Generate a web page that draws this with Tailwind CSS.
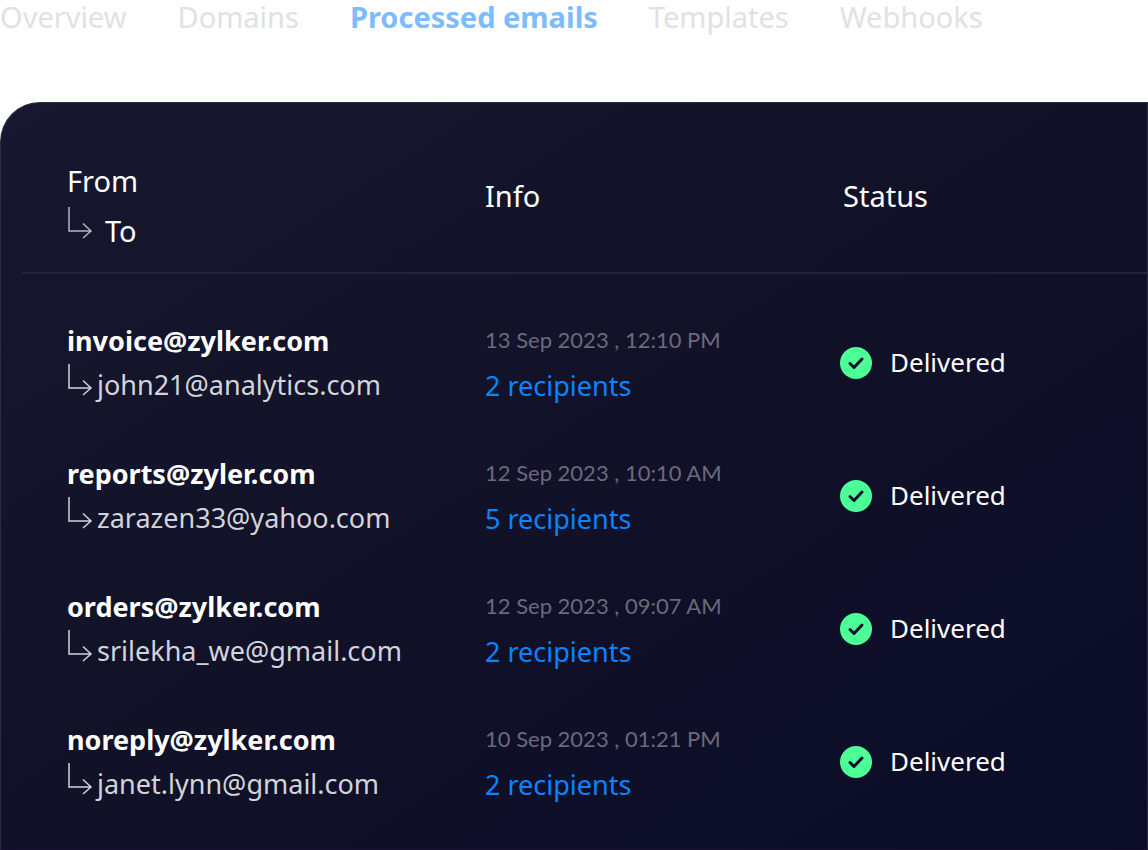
<!DOCTYPE html>
<html lang="en">
  <head>
    <meta charset="UTF-8" />
    <meta name="viewport" content="width=device-width, initial-scale=1.0" />
    <script src="https://cdn.jsdelivr.net/npm/@tailwindcss/browser@4"></script>
    <title>Processed emails</title>
  </head>
  <body
    class="flex flex-col min-h-screen bg-white font-['Noto_Sans',sans-serif] overflow-x-hidden"
  >
    <!-- ICONS -->
    <svg class="hidden">
      <symbol id="reply" viewBox="0 0 26 34">
        <path
          d="M2 1V25H24M16 17.500L24 25L16 32"
          fill="none"
          stroke="currentColor"
          stroke-width="1.500"
        />
      </symbol>
      <symbol id="check" viewBox="0 0 32 32">
        <circle cx="16" cy="16" r="16" fill="#4dff97" />
        <path
          d="M10 16.500L14 20.500L22 12"
          fill="none"
          stroke="#0d0e27"
          stroke-width="3"
          stroke-linecap="round"
          stroke-linejoin="round"
        />
      </symbol>
    </svg>

    <!-- TABS -->
    <nav>
      <ul class="flex gap-[51px] h-[102px] text-[29px] leading-[34px] text-[#dee2e4]">
        <li><a href="#overview">Overview</a></li>
        <li><a href="#domains">Domains</a></li>
        <li>
          <a href="#processed" class="font-bold text-[#7dbcff]" aria-current="page"
            >Processed emails</a
          >
        </li>
        <li><a href="#templates">Templates</a></li>
        <li><a href="#webhooks">Webhooks</a></li>
      </ul>
    </nav>

    <!-- EMAILS -->
    <main
      class="flex-1 pt-[53px] pl-[21px] border border-[#2c2c42] border-b-[#1a0f2c] rounded-tl-[40px] bg-linear-to-br from-[#17172f] via-[#111128] to-[#0b0c28] text-white"
    >
      <table class="w-full table-fixed border-separate border-spacing-0 text-left">
        <thead class="text-[29px] leading-[50px]">
          <tr>
            <th class="w-[463px] pl-[45px] pb-4 border-b-2 border-[#222238] font-normal">
              <p>From</p>
              <p class="flex">
                <svg class="w-[26px] h-[34px] mr-3 text-[#b5b5c0]"><use href="#reply" /></svg>
                To
              </p>
            </th>
            <th class="w-[355px] pb-9 border-b-2 border-[#222238] font-normal">Info</th>
            <th class="pl-[3px] pb-9 border-b-2 border-[#222238] font-normal">Status</th>
          </tr>
        </thead>
        <tbody class="before:block before:h-[22px]">
          <tr class="h-[133px]">
            <td class="pl-[45px]">
              <p class="text-[27px] leading-[44px] font-bold">invoice@zylker.com</p>
              <p class="flex text-[27px] leading-[44px] text-[#d2d4da]">
                <svg class="w-[26px] h-[34px] mr-1"><use href="#reply" /></svg>
                john21@analytics.com
              </p>
            </td>
            <td>
              <p class="font-['Lato',sans-serif] text-[22px] leading-[46px] text-[#6a6a7c]">13 Sep 2023 , 12:10 PM</p>
              <a href="#recipients" class="block text-[27px] leading-[46px] text-[#0a84ff]">2 recipients</a>
            </td>
            <td>
              <p class="flex items-center gap-[18px] text-[26px]">
                <svg class="size-8"><use href="#check" /></svg>
                Delivered
              </p>
            </td>
          </tr>
          <tr class="h-[133px]">
            <td class="pl-[45px]">
              <p class="text-[27px] leading-[44px] font-bold">reports@zyler.com</p>
              <p class="flex text-[27px] leading-[44px] text-[#d2d4da]">
                <svg class="w-[26px] h-[34px] mr-1"><use href="#reply" /></svg>
                zarazen33@yahoo.com
              </p>
            </td>
            <td>
              <p class="font-['Lato',sans-serif] text-[22px] leading-[46px] text-[#6a6a7c]">12 Sep 2023 , 10:10 AM</p>
              <a href="#recipients" class="block text-[27px] leading-[46px] text-[#0a84ff]">5 recipients</a>
            </td>
            <td>
              <p class="flex items-center gap-[18px] text-[26px]">
                <svg class="size-8"><use href="#check" /></svg>
                Delivered
              </p>
            </td>
          </tr>
          <tr class="h-[133px]">
            <td class="pl-[45px]">
              <p class="text-[27px] leading-[44px] font-bold">orders@zylker.com</p>
              <p class="flex text-[27px] leading-[44px] text-[#d2d4da]">
                <svg class="w-[26px] h-[34px] mr-1"><use href="#reply" /></svg>
                srilekha_we@gmail.com
              </p>
            </td>
            <td>
              <p class="font-['Lato',sans-serif] text-[22px] leading-[46px] text-[#6a6a7c]">12 Sep 2023 , 09:07 AM</p>
              <a href="#recipients" class="block text-[27px] leading-[46px] text-[#0a84ff]">2 recipients</a>
            </td>
            <td>
              <p class="flex items-center gap-[18px] text-[26px]">
                <svg class="size-8"><use href="#check" /></svg>
                Delivered
              </p>
            </td>
          </tr>
          <tr class="h-[133px]">
            <td class="pl-[45px]">
              <p class="text-[27px] leading-[44px] font-bold">noreply@zylker.com</p>
              <p class="flex text-[27px] leading-[44px] text-[#d2d4da]">
                <svg class="w-[26px] h-[34px] mr-1"><use href="#reply" /></svg>
                janet.lynn@gmail.com
              </p>
            </td>
            <td>
              <p class="font-['Lato',sans-serif] text-[22px] leading-[46px] text-[#6a6a7c]">10 Sep 2023 , 01:21 PM</p>
              <a href="#recipients" class="block text-[27px] leading-[46px] text-[#0a84ff]">2 recipients</a>
            </td>
            <td>
              <p class="flex items-center gap-[18px] text-[26px]">
                <svg class="size-8"><use href="#check" /></svg>
                Delivered
              </p>
            </td>
          </tr>
        </tbody>
      </table>
    </main>
  </body>
</html>
